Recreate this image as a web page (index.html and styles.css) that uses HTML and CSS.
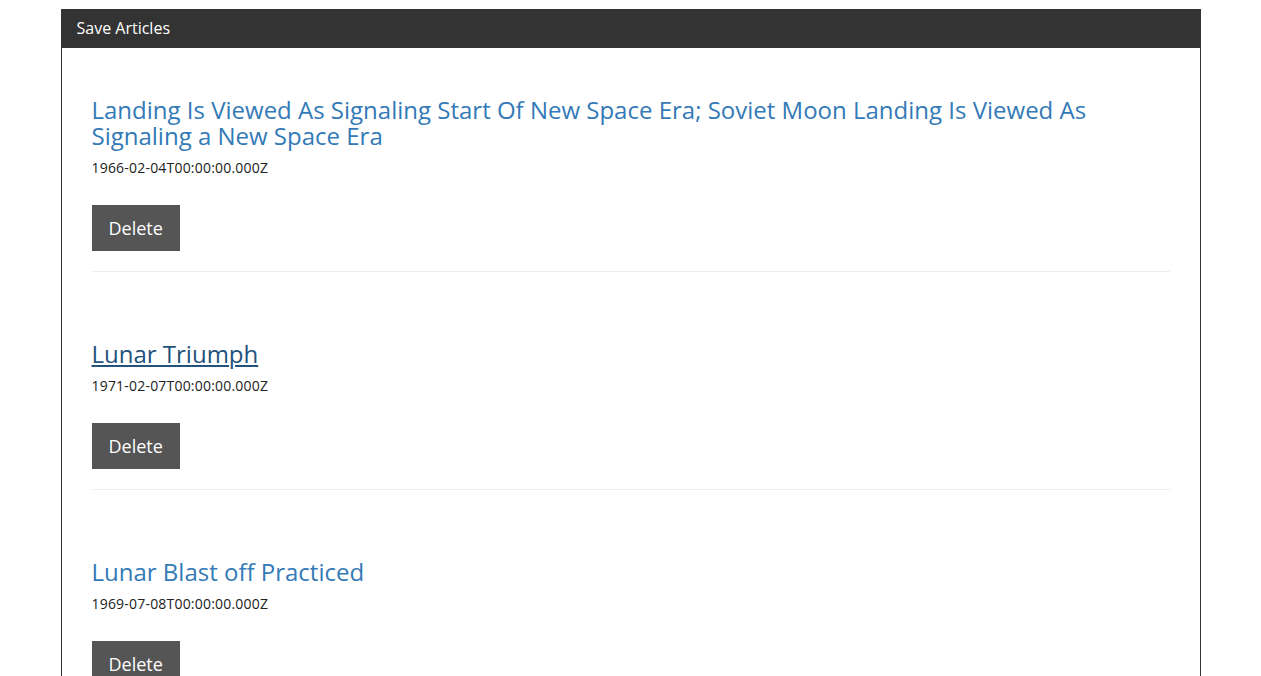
FILE: index.html
```html
<!DOCTYPE html>
<html>
<head>
<meta charset="utf-8">
<link rel="stylesheet" href="styles.css">
</head>
<body>
<div class="container">
  <div class="panel">
    <div class="panel-heading"><h3 class="panel-title">Save Articles</h3></div>
    <div class="panel-body">
      <div class="article">
        <h3 class="article-title"><a href="#">Landing Is Viewed As Signaling Start Of New Space Era; Soviet Moon Landing Is Viewed As Signaling a New Space Era</a></h3>
        <p class="date">1966-02-04T00:00:00.000Z</p>
        <button class="btn">Delete</button>
        <hr class="sep">
      </div>
      <div class="article">
        <h3 class="article-title"><a href="#" class="hover">Lunar Triumph</a></h3>
        <p class="date">1971-02-07T00:00:00.000Z</p>
        <button class="btn">Delete</button>
        <hr class="sep">
      </div>
      <div class="article">
        <h3 class="article-title"><a href="#">Lunar Blast off Practiced</a></h3>
        <p class="date">1969-07-08T00:00:00.000Z</p>
        <button class="btn">Delete</button>
        <hr class="sep">
      </div>
    </div>
  </div>
</div>
</body>
</html>
```
FILE: styles.css
```css
html, body {
  margin: 0;
  padding: 0;
  background: #fff;
}
body {
  font-family: "Open Sans", "Liberation Sans", sans-serif;
  color: #333;
  font-size: 14px;
  line-height: 1.42857;
}
.container {
  width: 1140px;
  margin: 0 auto;
  padding-top: 9px;
}
.panel {
  border: 1px solid #333;
  border-top: none;
  background: #fff;
}
.panel-heading {
  background: #333;
  padding: 10px 15px;
  height: 19px;
}
.panel-title {
  margin: 0;
  font-size: 16px;
  font-weight: 400;
  line-height: 19px;
  color: #fff;
}
.panel-body {
  padding: 0 30px;
}
.article {
  padding-top: 29px;
}
.article-title {
  margin: 20px 0 8px;
  font-size: 24px;
  font-weight: 400;
  line-height: 26.4px;
}
.article-title a {
  color: #337ab7;
  text-decoration: none;
}
.article-title a.hover {
  color: #23527c;
  text-decoration: underline;
}
.date {
  margin: 0 0 27.5px;
  font-size: 14px;
  line-height: 20px;
  color: #222;
  letter-spacing: 0.2px;
}
.btn {
  display: inline-block;
  font-family: inherit;
  font-size: 18px;
  line-height: 24px;
  padding: 10px 16px;
  border: 1px solid #555;
  background: #555;
  color: #fff;
  border-radius: 0;
  margin: 0;
  vertical-align: top;
}
.sep {
  margin: 20px 0;
  border: 0;
  border-top: 1px solid #eee;
  height: 0;
}
```
